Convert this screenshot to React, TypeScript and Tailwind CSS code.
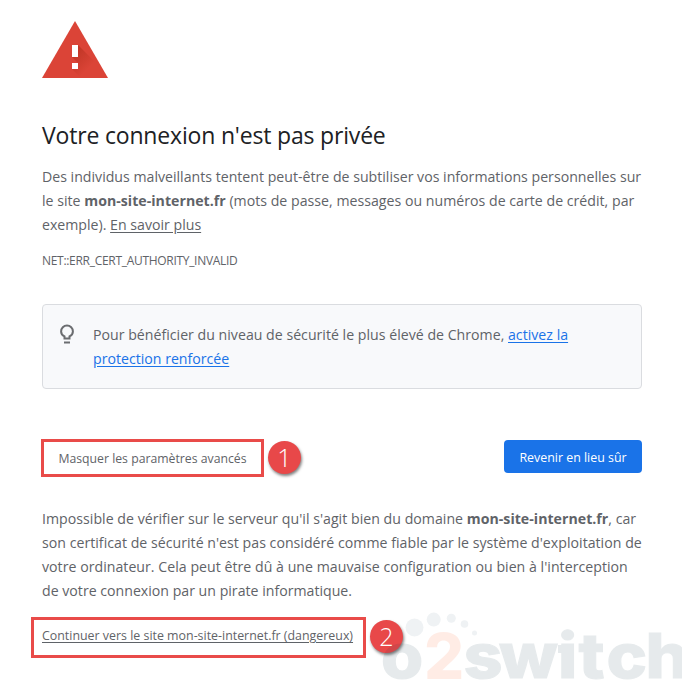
import React from "react";

const sans = "font-['Open_Sans','Noto_Sans',sans-serif]";

function Line({ className = "", children }: { className?: string; children: React.ReactNode }) {
  return (
    <div className="h-6 whitespace-nowrap">
      <span className={className}>{children}</span>
    </div>
  );
}

function WarningIcon() {
  return (
    <svg className="block h-[58px] w-[66px]" viewBox="0 0 66 58">
      <defs>
        <linearGradient id="shade" gradientUnits="userSpaceOnUse" x1="33" y1="30" x2="49" y2="46">
          <stop offset="0" stopColor="#a52714" stopOpacity=".5" />
          <stop offset="1" stopColor="#a52714" stopOpacity="0" />
        </linearGradient>
      </defs>
      <path d="M33 1 66 58H0Z" fill="#db4437" />
      <path d="M36 25 55 44 62 58H39L30 49l6-6-6-6z" fill="url(#shade)" />
      <path d="M30 25h6v12h-6zM30 43h6v6h-6z" fill="#fff" />
    </svg>
  );
}

function BulbIcon() {
  return (
    <svg className="block h-6 w-6" viewBox="0 0 24 24" fill="none" stroke="#6b6d70" strokeWidth="2">
      <path d="M9.5 15.6v-2.2C7.5 12.4 6.1 10.8 6.1 8.4a5.9 5.9 0 0 1 11.8 0c0 2.4-1.4 4-3.4 5v2.2z" />
      <path d="M9 19.5h6" />
    </svg>
  );
}

function Badge({ className, children }: { className: string; children: React.ReactNode }) {
  return (
    <div
      className={`absolute flex h-[33px] w-[33px] items-center justify-center rounded-full bg-[#e84849] text-[25px] font-[350] leading-none text-white shadow-[1px_2px_3px_rgba(0,0,0,0.5)] ${className}`}
    >
      <span>{children}</span>
    </div>
  );
}

function Watermark() {
  return (
    <svg className="absolute left-[370px] top-[600px] h-20 w-[312px]" viewBox="370 600 312 80">
      <g fill="#143c5f" fillOpacity=".065">
        <circle cx="414.5" cy="627.5" r="9" />
        <circle cx="433.7" cy="619.6" r="7" />
        <circle cx="451.3" cy="618.3" r="4.5" />
        <circle cx="464.5" cy="624" r="3.8" />
        <circle cx="474.5" cy="633" r="2.5" />
      </g>
      <g fontFamily="Inter, sans-serif" fontWeight="800" fontSize="62">
        <g fill="#143c4f" opacity=".1">
          <text
            x="346.4 421.4 453.6 507.3 525.9 551.3 586.8"
            y="678.5"
            transform="scale(1.1 1)"
            stroke="#143c4f"
            strokeWidth="1"
          >
            oswitch
          </text>
          <path d="M558 645h8v8h-8z" />
        </g>
        <text x="424" y="678.5" fontSize="63" fill="#ff6a35" opacity=".12">
          2
        </text>
      </g>
    </svg>
  );
}

export default function App() {
  return (
    <div className={`relative h-[680px] w-[682px] overflow-hidden bg-white pl-[42px] pr-10 pt-5 text-[14.15px] leading-6 text-[#5f6368] ${sans}`}>
      <WarningIcon />

      <h1 className="mt-[41px] h-8 whitespace-nowrap text-[23px] leading-8 tracking-[-0.18px] text-[#202124]">
        <span>Votre connexion n'est pas privée</span>
      </h1>

      <div className="mt-[14px]">
        <Line>Des individus malveillants tentent peut-être de subtiliser vos informations personnelles sur</Line>
        <Line className="tracking-[0.015px]">
          le site <b>mon-site-internet.fr</b> (mots de passe, messages ou numéros de carte de crédit, par
        </Line>
        <Line>
          exemple). <a className="underline underline-offset-2">En savoir plus</a>
        </Line>
      </div>

      <div className="mt-3 h-6 whitespace-nowrap text-[12px] tracking-[-0.3px]">
        <span>NET::ERR_CERT_AUTHORITY_INVALID</span>
      </div>

      <div className="mt-[31px] flex h-[85px] w-[600px] rounded border border-[#dadce0] bg-[#f8f9fb] pl-3 pt-[18px]">
        <BulbIcon />
        <div className="ml-[14px]">
          <Line className="tracking-[0.01px]">
            Pour bénéficier du niveau de sécurité le plus élevé de Chrome,{" "}
            <a className="text-[#1a73e8] underline underline-offset-2">activez la</a>
          </Line>
          <Line className="text-[#1a73e8] underline underline-offset-2">protection renforcée</Line>
        </div>
      </div>

      <div className="-ml-px mt-[50px] flex h-[38px] w-[601px] items-start justify-between text-[12.25px]">
        <button className="h-[38px] w-[223px] whitespace-nowrap border-3 border-[#e94b49] pt-px">
          <span>Masquer les paramètres avancés</span>
        </button>
        <button className="mt-px h-[33px] w-[138px] whitespace-nowrap rounded bg-[#1a73e8] pt-0.5 text-[12.4px] text-white">
          <span>Revenir en lieu sûr</span>
        </button>
      </div>

      <div className="mt-[30px]">
        <Line className="tracking-[0.02px]">
          Impossible de vérifier sur le serveur qu'il s'agit bien du domaine <b>mon-site-internet.fr</b>, car
        </Line>
        <Line className="tracking-[0.02px]">
          son certificat de sécurité n'est pas considéré comme fiable par le système d'exploitation de
        </Line>
        <Line className="tracking-[0.025px]">
          votre ordinateur. Cela peut être dû à une mauvaise configuration ou bien à l'interception
        </Line>
        <Line>de votre connexion par un pirate informatique.</Line>
      </div>

      <div className="-ml-[11px] mt-[14px] h-[41px] w-[335px] whitespace-nowrap border-3 border-[#e94b49] pl-2 pt-1 text-[12.4px]">
        <a className="underline underline-offset-2">Continuer vers le site mon-site-internet.fr (dangereux)</a>
      </div>

      <Badge className="left-[268px] top-[441px]">1</Badge>
      <Badge className="left-[370px] top-[620px]">2</Badge>
      <Watermark />
    </div>
  );
}
